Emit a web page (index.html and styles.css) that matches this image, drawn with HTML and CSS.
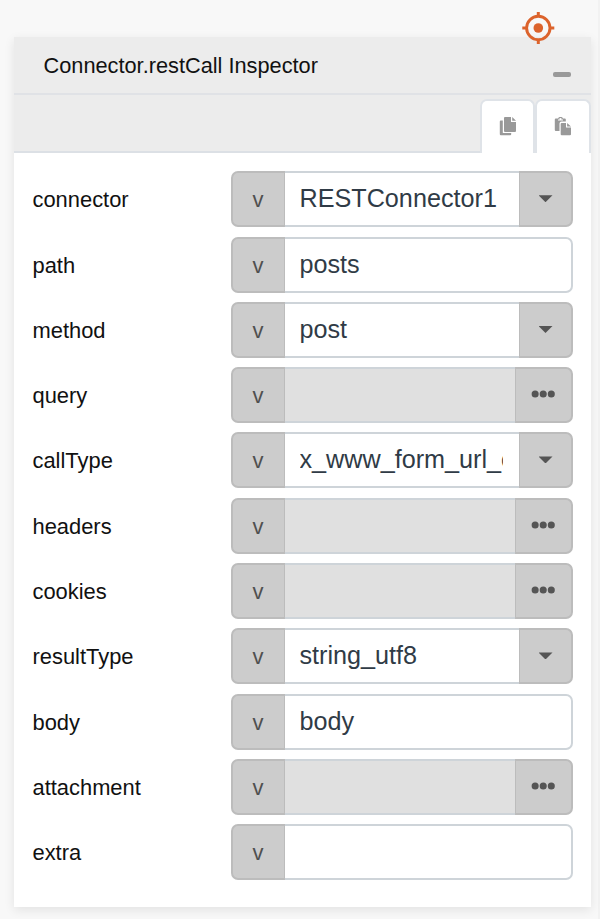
FILE: index.html
```html
<!DOCTYPE html>
<html lang="en">
<head>
<meta charset="utf-8">
<title>Connector.restCall Inspector</title>
<link rel="stylesheet" href="styles.css">
</head>
<body>
<svg class="target" viewBox="0 0 34 34"><g fill="none" stroke="#dc632c"><circle cx="17.3" cy="17" r="11.7" stroke-width="2.9"/><path d="M17.300 1v5M17.300 28v5M1.300 17h5M28.300 17h5" stroke-width="3"/></g><circle cx="17.3" cy="17" r="4.8" fill="#dc632c"/></svg>
<main class="panel">
<header class="head"><h1 class="title">Connector.restCall Inspector</h1><span class="minimize"></span></header>
<nav class="tabs">
<div class="tab"><svg class="icon" viewBox="0 0 18 20"><path fill="#999" d="M6 1h6v5h5v9a1 1 0 0 1-1 1H6a1 1 0 0 1-1-1V2a1 1 0 0 1 1-1zM13.2 1l3.8 3.8h-3.8zM1.8 4.400h2V17h8.400v1.200a1 1 0 0 1-1 1H1.800a1 1 0 0 1-1-1V5.400a1 1 0 0 1 1-1z"/></svg></div>
<div class="tab"><svg class="icon" viewBox="0 0 18 20"><path fill="#999" fill-rule="evenodd" d="M1.800 2.500h2.400C4.500.6 8.500.6 8.900 2.500h1.900a1 1 0 0 1 1 1v2H7.500a2 2 0 0 0-2 2v7.500H1.800a1 1 0 0 1-1-1V3.500a1 1 0 0 1 1-1zM4 3.400v1.200h5V3.400H7.400a1 1 0 1 0-1.800 0zM7.700 7H12v4.400h5v6.800a1 1 0 0 1-1 1H7.700a1 1 0 0 1-1-1V8a1 1 0 0 1 1-1zM13.100 7l3.900 3.500h-3.900z"/></svg></div>
</nav>
<section class="rows">
<div class="row"><span class="label">connector</span><div class="field"><span class="type">v</span><span class="value">RESTConnector1</span><span class="drop"><i class="caret"></i></span></div></div>
<div class="row"><span class="label">path</span><div class="field"><span class="type">v</span><span class="value">posts</span></div></div>
<div class="row"><span class="label">method</span><div class="field"><span class="type">v</span><span class="value">post</span><span class="drop"><i class="caret"></i></span></div></div>
<div class="row"><span class="label">query</span><div class="field"><span class="type">v</span><span class="value off"></span><svg class="more" viewBox="0 0 58 56"><g fill="#555"><circle cx="20" cy="27" r="3.8"/><circle cx="28.7" cy="27" r="3.8"/><circle cx="37.400" cy="27" r="3.8"/></g></svg></div></div>
<div class="row"><span class="label">callType</span><div class="field"><span class="type">v</span><span class="value"><span class="clip">x_www_form_url_e</span></span><span class="drop"><i class="caret"></i></span></div></div>
<div class="row"><span class="label">headers</span><div class="field"><span class="type">v</span><span class="value off"></span><svg class="more" viewBox="0 0 58 56"><g fill="#555"><circle cx="20" cy="27" r="3.8"/><circle cx="28.7" cy="27" r="3.8"/><circle cx="37.400" cy="27" r="3.8"/></g></svg></div></div>
<div class="row"><span class="label">cookies</span><div class="field"><span class="type">v</span><span class="value off"></span><svg class="more" viewBox="0 0 58 56"><g fill="#555"><circle cx="20" cy="27" r="3.8"/><circle cx="28.7" cy="27" r="3.8"/><circle cx="37.400" cy="27" r="3.8"/></g></svg></div></div>
<div class="row"><span class="label">resultType</span><div class="field"><span class="type">v</span><span class="value">string_utf8</span><span class="drop"><i class="caret"></i></span></div></div>
<div class="row"><span class="label">body</span><div class="field"><span class="type">v</span><span class="value">body</span></div></div>
<div class="row"><span class="label">attachment</span><div class="field"><span class="type">v</span><span class="value off"></span><svg class="more" viewBox="0 0 58 56"><g fill="#555"><circle cx="20" cy="27" r="3.8"/><circle cx="28.7" cy="27" r="3.8"/><circle cx="37.400" cy="27" r="3.8"/></g></svg></div></div>
<div class="row"><span class="label">extra</span><div class="field"><span class="type">v</span><span class="value"></span></div></div>
</section>
</main>
</body>
</html>
```
FILE: styles.css
```css
* { box-sizing: border-box; }
body {
  margin: 0;
  height: 919px;
  overflow: hidden;
  padding: 37px 9px 0 14px;
  background: linear-gradient(90deg, #f8f8f8 598px, #f2f2f2 598px);
  font-family: "Liberation Sans", Arial, sans-serif;
  color: #111;
}
.target { position: absolute; left: 521px; top: 11px; width: 34px; height: 34px; }
.panel { height: 870px; background: #fff; box-shadow: 0 3px 10px rgba(0, 0, 0, .09); }
.head {
  display: flex;
  justify-content: space-between;
  height: 58px;
  padding: 0 20px 0 29.500px;
  background: #ececec;
  border-bottom: 2px solid #e0e2e6;
}
.title { margin: 0; font-size: 21.750px; line-height: 58px; font-weight: 400; white-space: nowrap; }
.minimize { width: 18px; height: 5px; margin-top: 34.500px; border-radius: 2px; background: #999; }
.tabs {
  display: flex;
  justify-content: flex-end;
  height: 58px;
  padding-top: 4px;
  background: linear-gradient(#ececec 56.500px, #dce0e5 56.500px, #dce0e5 58px);
}
.tab {
  display: flex;
  justify-content: center;
  width: 55px;
  height: 54px;
  padding-top: 15px;
  background: #fff;
  border: 2px solid #dfe3e8;
  border-bottom: 0;
  border-radius: 7px 7px 0 0;
}
.tab + .tab { width: 56px; }
.icon { width: 18px; height: 20px; }
.rows { padding: 18.300px 18px 0 18px; }
.row { display: flex; height: 65.300px; }
.label { width: 198.500px; padding-left: .5px; flex: none; font-size: 21.900px; line-height: 58px; }
.field { display: flex; width: 342px; height: 56px; }
.type, .drop, .more { flex: none; background: #ccc; border: 2px solid #bcbcbc; }
.type {
  width: 54px;
  border-right-width: 1px;
  border-radius: 7px 0 0 7px;
  text-align: center;
  font-size: 22px;
  line-height: 54px;
  color: #505050;
}
.value {
  flex: 1;
  min-width: 0;
  padding: 0 14px 0 15px;
  border: solid #ced4d9;
  border-width: 2px 0;
  font-size: 25.200px;
  line-height: 51px;
  color: #303b46;
  white-space: nowrap;
}
.value:last-child { border-right-width: 2px; border-radius: 0 7px 7px 0; }
.off { background: #e0e0e0; }
.clip { display: block; overflow: hidden; margin-right: 2px; }
.drop, .more { border-left-width: 1px; border-radius: 0 7px 7px 0; }
.drop { display: flex; justify-content: center; width: 54px; padding: 22px 0 0 1px; }
.more { width: 58px; height: 56px; }
.caret { width: 14px; height: 7px; background: #555; clip-path: polygon(0 0, 100% 0, 50% 100%); }
```
